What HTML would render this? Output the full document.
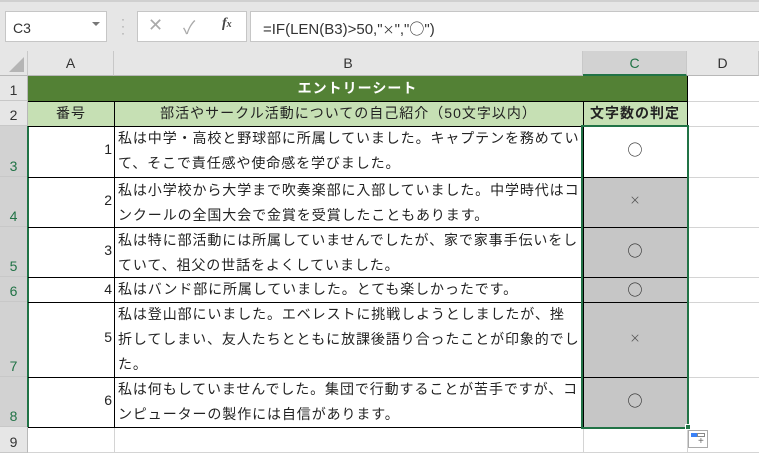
<!DOCTYPE html>
<html><head><meta charset="utf-8"><style>
*{margin:0;padding:0;box-sizing:border-box}
body{width:759px;height:453px;background:#fff;position:relative;overflow:hidden;font-family:"Liberation Sans","Noto Sans CJK JP",sans-serif;font-size:14px;color:#222}
.a{position:absolute}
.hl{position:absolute;background:#d4d4d4}
.bl{position:absolute;background:#000}
.rh{position:absolute;left:0;width:28px;background:#e6e6e6;border-bottom:1px solid #c8c8c8;border-right:1px solid #b8b8b8;text-align:center;font-size:14px;color:#333;display:flex;align-items:flex-end;justify-content:center;padding-bottom:2px}
.rh.s{background:#d2d2d2;color:#217346}
.ch{position:absolute;top:51px;height:25px;background:#e6e6e6;border-right:1px solid #c8c8c8;border-bottom:1px solid #b8b8b8;text-align:center;line-height:24px;color:#333;font-size:14px}
.t{position:absolute;left:118px;width:470px;line-height:22px;letter-spacing:0.9px;color:#222;white-space:nowrap}
.n{position:absolute;left:28px;width:84px;text-align:right;color:#222}
.c{position:absolute;left:583px;width:104px;text-align:center;font-family:"Noto Sans CJK JP",sans-serif;font-size:15px;color:#222}
.x{font-size:11px;color:#555}
</style></head><body>
<div class="a" style="left:0;top:0;width:759px;height:51px;background:#e6e6e6"></div>
<div class="a" style="left:0;top:0;width:759px;height:2px;background:#d0d0d0"></div>
<div class="a" style="left:5px;top:11px;width:102px;height:31px;background:#fff;border:1px solid #c6c6c6;padding:8px 7px;font-size:14px;color:#333">C3</div>
<div class="a" style="left:92px;top:22px;width:0;height:0;border-left:4px solid transparent;border-right:4px solid transparent;border-top:4px solid #777"></div>
<div class="a" style="left:121px;top:16px;color:#999;font-size:12px;line-height:7px">·<br>·<br>·</div>
<div class="a" style="left:137px;top:11px;width:110px;height:31px;background:#fff;border:1px solid #c6c6c6"></div>
<div class="a" style="left:148px;top:15px;color:#aaa;font-size:18px">✕</div>
<div class="a" style="left:183px;top:14px;color:#aaa;font-size:18px">✓</div>
<div class="a" style="left:222px;top:16px;color:#444;font-size:14px;font-style:italic;font-family:'Liberation Serif',serif;font-weight:bold">f<span style="font-size:10px">x</span></div>
<div class="a" style="left:250px;top:11px;width:509px;height:31px;background:#fff;border:1px solid #c6c6c6;border-right:none;padding:6px 12px;font-size:15px;color:#333">=IF(LEN(B3)&gt;50,"<span style="font-family:'Noto Sans CJK JP';font-size:12px">×</span>","<span style="font-family:'Noto Sans CJK JP'">○</span>")</div>

<div class="a" style="left:0;top:51px;width:28px;height:25px;background:#e6e6e6;border-right:1px solid #c8c8c8;border-bottom:1px solid #b8b8b8"></div>
<div class="a" style="left:9px;top:57px;width:0;height:0;border-left:15px solid transparent;border-bottom:15px solid #b5b5b5"></div>
<div class="ch" style="left:28px;width:86px">A</div>
<div class="ch" style="left:114px;width:469px">B</div>
<div class="ch" style="left:583px;width:104px;background:#d2d2d2;color:#217346;border-bottom:2px solid #217346">C</div>
<div class="ch" style="left:687px;width:72px">D</div>

<div class="rh" style="top:76px;height:25px">1</div>
<div class="rh" style="top:101px;height:25px">2</div>
<div class="rh s" style="top:126px;height:51px">3</div>
<div class="rh s" style="top:177px;height:50px">4</div>
<div class="rh s" style="top:227px;height:50px">5</div>
<div class="rh s" style="top:277px;height:25px">6</div>
<div class="rh s" style="top:302px;height:75px">7</div>
<div class="rh s" style="top:377px;height:50px">8</div>
<div class="rh" style="top:427px;height:26px">9</div>
<div class="a" style="left:27px;top:126px;width:2px;height:301px;background:#217346"></div>

<div class="hl" style="left:687px;top:101px;width:72px;height:1px"></div>
<div class="hl" style="left:687px;top:126px;width:72px;height:1px"></div>
<div class="hl" style="left:687px;top:177px;width:72px;height:1px"></div>
<div class="hl" style="left:687px;top:227px;width:72px;height:1px"></div>
<div class="hl" style="left:687px;top:277px;width:72px;height:1px"></div>
<div class="hl" style="left:687px;top:302px;width:72px;height:1px"></div>
<div class="hl" style="left:687px;top:377px;width:72px;height:1px"></div>
<div class="hl" style="left:28px;top:452px;width:731px;height:1px"></div>
<div class="hl" style="left:114px;top:427px;width:1px;height:26px"></div>
<div class="hl" style="left:583px;top:427px;width:1px;height:26px"></div>
<div class="hl" style="left:687px;top:427px;width:1px;height:26px"></div>

<div class="a" style="left:28px;top:76px;width:659px;height:25px;background:#538135;color:#fff;font-weight:bold;text-align:center;line-height:25px;letter-spacing:1px">エントリーシート</div>
<div class="a" style="left:28px;top:101px;width:555px;height:25px;background:#c6e0b4"></div>
<div class="a" style="left:583px;top:101px;width:104px;height:25px;background:#c6e0b4"></div>
<div class="a" style="left:28px;top:101px;width:86px;line-height:25px;text-align:center;letter-spacing:1px">番号</div>
<div class="a" style="left:114px;top:101px;width:469px;line-height:25px;text-align:center;letter-spacing:1px">部活やサークル活動についての自己紹介（50文字以内）</div>
<div class="a" style="left:583px;top:101px;width:104px;line-height:25px;text-align:center;font-weight:bold;letter-spacing:1px">文字数の判定</div>

<div class="a" style="left:583px;top:177px;width:104px;height:250px;background:#c6c6c6"></div>

<div class="bl" style="left:28px;top:101px;width:659px;height:1px"></div>
<div class="bl" style="left:28px;top:126px;width:659px;height:1px"></div>
<div class="bl" style="left:28px;top:177px;width:659px;height:1px"></div>
<div class="bl" style="left:28px;top:227px;width:659px;height:1px"></div>
<div class="bl" style="left:28px;top:277px;width:659px;height:1px"></div>
<div class="bl" style="left:28px;top:302px;width:659px;height:1px"></div>
<div class="bl" style="left:28px;top:377px;width:659px;height:1px"></div>
<div class="bl" style="left:28px;top:427px;width:659px;height:1px"></div>
<div class="bl" style="left:114px;top:101px;width:1px;height:326px"></div>
<div class="bl" style="left:583px;top:101px;width:1px;height:326px"></div>
<div class="bl" style="left:687px;top:76px;width:1px;height:351px"></div>

<div class="n" style="top:141px">1</div>
<div class="n" style="top:192px">2</div>
<div class="n" style="top:242px">3</div>
<div class="n" style="top:281px">4</div>
<div class="n" style="top:329px">5</div>
<div class="n" style="top:392px">6</div>

<div class="t" style="top:119px;line-height:25px;padding-top:7px">私は中学・高校と野球部に所属していました。キャプテンを務めてい<br>て、そこで責任感や使命感を学びました。</div>
<div class="t" style="top:176px;line-height:25px;padding-top:2px">私は小学校から大学まで吹奏楽部に入部していました。中学時代はコ<br>ンクールの全国大会で金賞を受賞したこともあります。</div>
<div class="t" style="top:226px;line-height:25px;padding-top:2px">私は特に部活動には所属していませんでしたが、家で家事手伝いをし<br>ていて、祖父の世話をよくしていました。</div>
<div class="t" style="top:277px;line-height:25px">私はバンド部に所属していました。とても楽しかったです。</div>
<div class="t" style="top:302px;line-height:25px">私は登山部にいました。エベレストに挑戦しようとしましたが、挫<br>折してしまい、友人たちとともに放課後語り合ったことが印象的でし<br>た。</div>
<div class="t" style="top:377px;line-height:25px">私は何もしていませんでした。集団で行動することが苦手ですが、コ<br>ンピューターの製作には自信があります。</div>

<div class="c" style="top:139px">○</div>
<div class="c x" style="top:192px">×</div>
<div class="c" style="top:240px">○</div>
<div class="c" style="top:279px">○</div>
<div class="c x" style="top:330px">×</div>
<div class="c" style="top:390px">○</div>

<div class="a" style="left:581px;top:125px;width:108px;height:304px;border:2px solid #217346"></div>
<div class="a" style="left:685px;top:424px;width:6px;height:6px;background:#217346;border:1px solid #fff"></div>
<div class="a" style="left:688px;top:430px;width:20px;height:18px;border:1px solid #aaa;background:#fff"></div>
<div class="a" style="left:691px;top:433px;width:6px;height:4px;background:#3b82f6"></div>
<div class="a" style="left:697px;top:433px;width:8px;height:4px;border:1px solid #888"></div>
<div class="a" style="left:698px;top:437px;font-size:10px;color:#666;line-height:10px">+</div>
</body></html>
